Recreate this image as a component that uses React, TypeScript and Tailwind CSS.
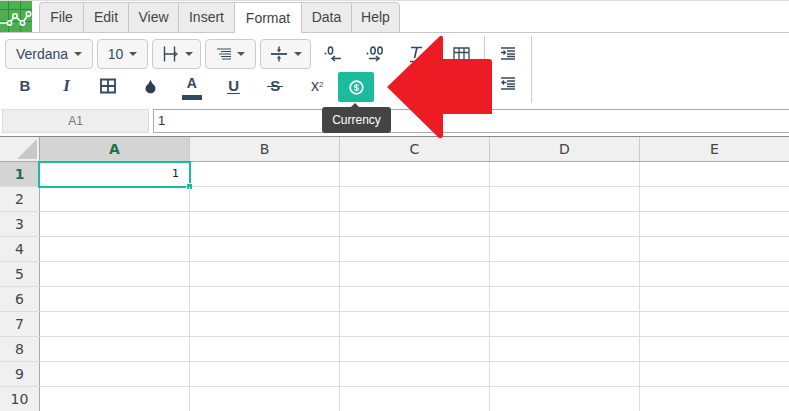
import { Droplet } from "lucide-react";

const tabs = [
  { name: "File", w: "w-[44px]" },
  { name: "Edit", w: "w-[45px]" },
  { name: "View", w: "w-[50px]" },
  { name: "Insert", w: "w-[56px]" },
  { name: "Format", w: "w-[67px]", active: true },
  { name: "Data", w: "w-[50px]" },
  { name: "Help", w: "w-[49px]" },
];

const cols = ["A", "B", "C", "D", "E"];
const rows = [1, 2, 3, 4, 5, 6, 7, 8, 9, 10];

function Caret() {
  return <span className="ml-[6px] h-0 w-0 border-x-[4px] border-t-[4px] border-x-transparent border-t-[#555]" />;
}

function DropBtn({ w, children }: { w: string; children: React.ReactNode }) {
  return (
    <div className={`${w} flex h-[30px] shrink-0 items-center justify-center rounded-[4px] border border-[#ccc] bg-[#f6f6f6] text-[14px] text-[#34495e]`}>
      {children}
      <Caret />
    </div>
  );
}

function Svg({ children, size = 18 }: { children: React.ReactNode; size?: number }) {
  return (
    <svg width={size} height={size} viewBox="0 0 18 18" fill="none" stroke="#34495e" strokeWidth="1.4">
      {children}
    </svg>
  );
}

function IconCell({ w = "w-[41.75px] pb-[2px]", children }: { w?: string; children: React.ReactNode }) {
  return <div className={`${w} flex h-[30px] shrink-0 items-center justify-center`}>{children}</div>;
}

function IndentIcon({ flip }: { flip?: boolean }) {
  return (
    <svg width="14" height="13" viewBox="0 0 14 13" fill="none" stroke="#34495e" strokeWidth="1.3">
      <path d="M0 1h14M6 4h8M6 7h8M6 9.500h8M0 12h14" />
      {flip ? (
        <path d="M5.500 5.500H1M3 3.500 1 5.500l2 2" />
      ) : (
        <path d="M0 5.500h4.500M2.500 3.500l2 2-2 2" />
      )}
    </svg>
  );
}

export default function App() {
  return (
    <div className="relative h-[411px] w-[789px] overflow-hidden bg-white font-['Liberation_Sans',sans-serif]">
      {/* menu tabs */}
      <div className="flex h-[33px] border-b border-t border-b-[#c8c8c8] border-t-[#ddd]">
        <div className="h-[31px] w-[32px] shrink-0 bg-[#4caf50]">
          <svg width="32" height="31" viewBox="0 0 32 31" fill="none">
            <path d="M0 8.500h32M0 20.500h32M8.500 0v31M20.500 0v31" stroke="#2e8b3d" strokeWidth="1" />
            <path d="M0 22h9.500l5.500-7 7.500 7 6-9" stroke="#fff" strokeWidth="1.7" />
            <circle cx="9.500" cy="22" r="2.200" fill="#4caf50" stroke="#fff" strokeWidth="1.600" />
            <circle cx="15" cy="15" r="2.200" fill="#4caf50" stroke="#fff" strokeWidth="1.600" />
            <circle cx="22.500" cy="22" r="2.200" fill="#4caf50" stroke="#fff" strokeWidth="1.600" />
            <circle cx="28.500" cy="13" r="2.200" fill="#4caf50" stroke="#fff" strokeWidth="1.600" />
          </svg>
        </div>
        <div className="ml-[7px] flex pt-px">
          {tabs.map((t) => (
            <div
              key={t.name}
              className={`${t.w} -mb-px flex h-[31px] items-center justify-center border-l border-t border-[#c8c8c8] text-[14px] text-[#444] first:rounded-tl-[4px] last:rounded-tr-[4px] last:border-r ${t.active ? "border-b-0 bg-white" : "border-b bg-[#ececec]"}`}
            >
              {t.name}
            </div>
          ))}
        </div>
      </div>

      {/* toolbar */}
      <div className="flex h-[76px] pl-[5px]">
        <div className="w-[479px] shrink-0 pt-[6px]">
          <div className="flex items-center gap-[4px]">
            <DropBtn w="w-[88px]">Verdana</DropBtn>
            <DropBtn w="w-[51px]">10</DropBtn>
            <DropBtn w="w-[49px]">
              <Svg>
                <path d="M3.500 1.500v15M13.500 1.500v15M3.500 9h12" />
                <path d="M14 7l2.500 2-2.500 2" strokeWidth="1" />
              </Svg>
            </DropBtn>
            <DropBtn w="w-[51px]">
              <svg width="14" height="14" viewBox="0 0 14 14" fill="none" stroke="#34495e" strokeWidth="1.100">
                <path d="M0 2h14M4 4.500h10M2 7h12M4 9.500h10M5 12h9" />
              </svg>
            </DropBtn>
            <DropBtn w="w-[51px]">
              <Svg>
                <path d="M1 9h16" strokeWidth="1.800" />
                <path d="M9 1.500v4M9 12.500v4" />
                <path d="M9 7.500 6.800 4.500h4.400zM9 10.500l-2.200 3h4.400z" fill="#34495e" stroke="none" />
              </Svg>
            </DropBtn>
            <div className="-ml-[3px] flex">
              <IconCell w="w-[43px]">
                <svg width="20" height="16" viewBox="0 0 20 16" fill="none" stroke="#34495e" strokeWidth="1.5">
                  <circle cx="1.500" cy="7.500" r="1" fill="#34495e" stroke="none" />
                  <ellipse cx="6.500" cy="4.500" rx="2.200" ry="3.500" />
                  <path d="M17 12.500H8M11 10l-3 2.500 3 2.500" />
                </svg>
              </IconCell>
              <IconCell w="w-[42px]">
                <svg width="20" height="16" viewBox="0 0 20 16" fill="none" stroke="#34495e" strokeWidth="1.500">
                  <circle cx="1.500" cy="7.500" r="1" fill="#34495e" stroke="none" />
                  <ellipse cx="7" cy="4.500" rx="2.200" ry="3.500" />
                  <ellipse cx="14" cy="4.500" rx="2.200" ry="3.500" />
                  <path d="M3 12.500h10M10 10l3 2.500-3 2.500" />
                </svg>
              </IconCell>
              <IconCell w="w-[38px]">
                <svg width="18" height="18" viewBox="0 0 18 18" fill="none" stroke="#34495e" strokeWidth="1.700">
                  <path d="M4 2.500h11M10 2.500 7.500 13M3 16.500h11" />
                </svg>
              </IconCell>
              <IconCell w="w-[49px] pl-[3px]">
                <svg width="17" height="15" viewBox="0 0 17 15" fill="none" stroke="#34495e" strokeWidth="1.300">
                  <path d="M1 1h15v13H1zM1 5.500h15M6 1v13M11 1v13" />
                </svg>
              </IconCell>
            </div>
          </div>
          <div className="-ml-[1px] mt-[3px] flex items-center">
            <IconCell>
              <span className="text-[15px] font-bold text-[#34495e]">B</span>
            </IconCell>
            <IconCell>
              <span className="font-['Liberation_Serif',serif] text-[17px] font-semibold text-[#34495e] italic">I</span>
            </IconCell>
            <IconCell>
              <Svg>
                <path d="M2 2.500h14v13H2zM2 9h14M9 2.500v13" strokeWidth="1.800" />
              </Svg>
            </IconCell>
            <IconCell>
              <Droplet size={15} color="#2c3e50" fill="#2c3e50" />
            </IconCell>
            <IconCell w="w-[41.75px] pt-[2px]">
              <div className="flex flex-col items-center">
                <span className="text-[14px] leading-[15px] font-bold text-[#34495e]">A</span>
                <span className="mt-[4px] h-[5px] w-[20px] bg-[#34495e]" />
              </div>
            </IconCell>
            <IconCell>
              <span className="border-b border-[#34495e] px-[1px] text-[15px] leading-[15px] font-semibold text-[#34495e]">U</span>
            </IconCell>
            <IconCell>
              <span className="relative text-[15px] font-semibold text-[#34495e]">
                S
                <span className="absolute top-1/2 -left-[3px] h-px w-[16px] bg-[#34495e]" />
              </span>
            </IconCell>
            <IconCell>
              <span className="text-[16px] leading-none text-[#34495e]">
                x<sup className="text-[8px]">2</sup>
              </span>
            </IconCell>
            <div className="flex h-[30px] w-[36px] items-center justify-center rounded-[2px] bg-[#1abc9c]">
              <svg width="15" height="15" viewBox="0 0 14 14" fill="none">
                <circle cx="7" cy="7" r="5.900" stroke="#fff" strokeWidth="1.600" />
                <path d="M9 5.200Q7 3.800 5.500 5t1.500 2q2.300.6 1.600 2T5 8.900M7 3.500v7" stroke="#fff" strokeWidth="1.100" />
              </svg>
            </div>
          </div>
        </div>
        <div className="mt-[3px] flex h-[67px] w-[48px] flex-col items-center gap-[17px] border-x border-[#ccc] pt-[11px]">
          <IndentIcon />
          <IndentIcon flip />
        </div>
      </div>

      {/* formula bar */}
      <div className="flex h-[24px] gap-[4px] pl-[2px]">
        <div className="flex w-[147px] items-center justify-center border border-[#ddd] bg-[#eee] text-[12px] text-[#777]">A1</div>
        <div className="flex flex-1 items-center border-y border-l border-[#aaa] pl-[4px] text-[13px] text-[#333]">1</div>
      </div>

      {/* grid */}
      <div className="mt-[3px] font-['DejaVu_Sans',sans-serif]">
        <div className="flex h-[26px] border-y border-b-[#aaa] border-t-[#888] bg-[#f0f0f0] text-[14px] text-[#444]">
          <div className="relative w-[40px] shrink-0 border-r border-[#aaa]">
            <span className="absolute right-[2px] bottom-[2px] h-0 w-0 border-b-[20px] border-l-[20px] border-b-[#c8c8c8] border-l-transparent" />
          </div>
          {cols.map((c, i) => (
            <div
              key={c}
              className={`flex w-[150px] shrink-0 items-center justify-center border-r border-[#ccc] ${i === 0 ? "bg-[#d4d4d4] font-bold text-[#217346]" : ""}`}
            >
              {c}
            </div>
          ))}
        </div>
        {rows.map((r) => (
          <div key={r} className="flex h-[25px] border-b border-[#ddd]">
            <div
              className={`flex w-[40px] shrink-0 items-center justify-center border-r border-[#aaa] text-[14px] ${r === 1 ? "bg-[#d4d4d4] font-bold text-[#217346]" : "bg-[#f0f0f0] text-[#444]"}`}
            >
              {r}
            </div>
            {cols.map((c) => (
              <div key={c} className="relative w-[150px] shrink-0 border-r border-[#ddd]">
                {r === 1 && c === "A" && (
                  <div className="absolute -top-px -left-[2px] h-[27px] w-[153px] border-2 border-[#1abc9c] bg-white pr-[10px] text-right text-[11px] leading-[22px] text-[#222]">
                    1
                    <span className="absolute -right-[4px] -bottom-[4px] h-[7px] w-[7px] border border-white bg-[#1abc9c]" />
                  </div>
                )}
              </div>
            ))}
          </div>
        ))}
      </div>

      {/* tooltip */}
      <div className="absolute top-[107px] left-[322px] flex h-[26px] w-[69px] items-center justify-center rounded-[3px] bg-[#444] text-[12px] text-white">
        Currency
        <span className="absolute -top-[4px] left-[29px] h-0 w-0 border-x-[4px] border-b-[4px] border-x-transparent border-b-[#444]" />
      </div>

      {/* red arrow over the page */}
      <svg className="absolute top-0 left-0" width="789" height="411" fill="none">
        <path d="M387 87 440 36Q443 35 443 38V59H489Q492 59 492 62V114H443V136Q442 139 439 138Z" fill="#ed1c24" />
      </svg>
    </div>
  );
}
